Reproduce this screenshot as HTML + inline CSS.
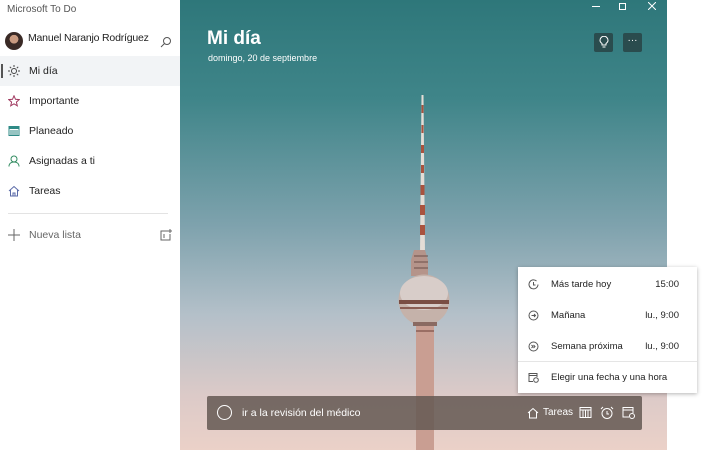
<!DOCTYPE html>
<html><head><meta charset="utf-8"><style>
*{margin:0;padding:0;box-sizing:border-box}
body{width:709px;height:450px;overflow:hidden;background:#fff;font-family:"Liberation Sans",sans-serif;position:relative}
.side{position:absolute;left:0;top:0;width:180px;height:450px;background:#fff;color:#222}
.title{position:absolute;left:7px;top:4px;font-size:10px;color:#555}
.user{position:absolute;left:28px;top:32px;font-size:10.5px;letter-spacing:-0.2px}
.av{position:absolute;left:5px;top:32px;width:18px;height:18px;border-radius:50%;background:radial-gradient(circle at 50% 40%,#c99a80 0 30%,#3a2a26 32%)}
.item{position:absolute;left:0;width:180px;height:30px;font-size:10.5px;line-height:30px;padding-left:29px}
.item svg{position:absolute;left:8px;top:9px}
.sel{background:#f2f4f6}
.sel:before{content:"";position:absolute;left:1px;top:8px;width:2px;height:14px;background:#555}
.main{position:absolute;left:180px;top:0;width:487px;height:450px;background:linear-gradient(180deg,#2e777a 0%,#3f8589 22%,#7ea2ad 50%,#b4c0c9 70%,#dccac8 88%,#ebd1c8 100%);overflow:hidden}
.h1{position:absolute;left:27px;top:28px;color:#fff;font-size:19px;font-weight:bold}
.sub{position:absolute;left:28px;top:53px;color:#fff;font-size:9px}
.btn{position:absolute;top:33px;width:19px;height:19px;background:#2a4c4e;border-radius:2px;color:#fff;font-size:10px;text-align:center;line-height:16px}
.pop{position:absolute;left:518px;top:267px;width:179px;height:126px;background:#fff;box-shadow:0 1px 4px rgba(0,0,0,.3);font-size:9.5px;color:#222}
.pr{position:absolute;left:0;width:179px;height:31px;line-height:31px;padding-left:33px}
.pr span{position:absolute;right:18px}
.pr svg{position:absolute;left:10px;top:10px}
.bar{position:absolute;left:27px;top:396px;width:435px;height:34px;background:rgba(100,88,82,.85);border-radius:2px;color:#fff;font-size:10.5px}
</style></head><body>
<div class="side">
<div class="title">Microsoft To Do</div>
<div class="av"></div>
<div class="user">Manuel Naranjo Rodríguez</div>
<svg style="position:absolute;left:160px;top:36px" width="12" height="12" viewBox="0 0 12 12"><circle cx="7" cy="5" r="3.5" fill="none" stroke="#555"/><path d="M4.5 7.5L1 11" stroke="#555"/></svg>
<div class="item sel" style="top:56px"><svg width="12" height="12" viewBox="0 0 12 12" stroke="#444" fill="none"><circle cx="6" cy="6" r="2.5"/><path d="M6 0v2M6 10v2M0 6h2M10 6h2M1.8 1.8l1.4 1.4M8.8 8.8l1.4 1.4M1.8 10.2l1.4-1.4M8.8 3.2l1.4-1.4"/></svg>Mi día</div>
<div class="item" style="top:86px"><svg width="12" height="12" viewBox="0 0 12 12"><path d="M6 .8l1.5 3.5 3.8.3-2.9 2.5.9 3.7L6 8.8 2.7 10.8l.9-3.7L.7 4.6l3.8-.3z" fill="none" stroke="#a0395f"/></svg>Importante</div>
<div class="item" style="top:116px"><svg width="12" height="12" viewBox="0 0 12 12"><rect x="1" y="1.5" width="10" height="9" fill="none" stroke="#2e8a86"/><rect x="1" y="1.5" width="10" height="2.5" fill="#2e8a86"/><path d="M3 5v5M5 5v5M7 5v5M9 5v5" stroke="#2e8a86"/></svg>Planeado</div>
<div class="item" style="top:146px"><svg width="12" height="12" viewBox="0 0 12 12" fill="none" stroke="#2e8a5e"><circle cx="6" cy="4" r="3"/><path d="M1 11.5c0-3 2.2-4.5 5-4.5s5 1.5 5 4.5"/></svg>Asignadas a ti</div>
<div class="item" style="top:176px"><svg width="12" height="12" viewBox="0 0 12 12" fill="none" stroke="#5a6aa8"><path d="M1 6L6 1.5 11 6M2.5 5v6h7V5M5 11V8h2v3"/></svg>Tareas</div>
<div style="position:absolute;left:8px;top:213px;width:160px;height:1px;background:#e3e3e3"></div>
<div class="item" style="top:220px;color:#666"><svg width="12" height="12" viewBox="0 0 12 12" stroke="#666"><path d="M6 0v12M0 6h12"/></svg>Nueva lista</div>
<svg style="position:absolute;left:160px;top:229px" width="12" height="12" viewBox="0 0 12 12" fill="none" stroke="#666"><path d="M8 2H1v9h9V5M10 0v4M8 2h4M4 5v4"/></svg>
</div>
<div class="main">
<div class="h1">Mi día</div>
<div class="sub">domingo, 20 de septiembre</div>
<div style="position:absolute;left:412px;top:6px;width:8px;height:1px;background:#fff"></div>
<div style="position:absolute;left:439px;top:3px;width:7px;height:7px;border:1px solid #fff"></div>
<svg style="position:absolute;left:468px;top:2px" width="8" height="8" viewBox="0 0 8 8" stroke="#fff"><path d="M0 0L8 8M8 0L0 8"/></svg>
<div class="btn" style="left:414px"><svg width="10" height="12" viewBox="0 0 10 12" style="margin-top:3px" fill="none" stroke="#fff"><path d="M3 9V7.5C1.5 6.5 1 5.5 1 4.3A4 4 0 019 4.3c0 1.2-.5 2.2-2 3.2V9zM3.5 11h3"/></svg></div>
<div class="btn" style="left:443px">···</div>
<svg style="position:absolute;left:0;top:0" width="487" height="450">
<path d="M241.5 95h2l1.5 160h-5z" fill="#e4ddd6"/>
<path d="M241.5 105h2v8h-2zM241.5 125h2v8h-2zM241 145h3v8h-3zM241 165h3v8h-3zM240.5 185h4v10h-4zM240 205h5v10h-5zM240 225h5v10h-5z" fill="#a9533f"/>
<path d="M234 250h11l3 10v16h-17v-16z" fill="#b5948a"/>
<path d="M234 256h14M234 262h14M234 268h14" stroke="#6b4e48"/>
<circle cx="244" cy="300" r="25.5" fill="#c5b2aa"/>
<ellipse cx="244" cy="293" rx="24" ry="17" fill="#d8cdc9"/>
<rect x="219" y="300" width="50" height="4" fill="#7a4e44"/>
<rect x="220" y="307" width="48" height="2" fill="#8a5e54"/>
<rect x="236" y="322" width="18" height="130" fill="#c99e92"/>
<rect x="233" y="322" width="24" height="4" fill="#8a6a62"/>
<rect x="236" y="330" width="18" height="2" fill="#9a6e64"/>
</svg>
<div class="bar">
<div style="position:absolute;left:10px;top:9px;width:15px;height:15px;border:1.5px solid #fff;border-radius:50%"></div>
<div style="position:absolute;left:35px;top:11px">ir a la revisión del médico</div>
<svg style="position:absolute;left:320px;top:11px" width="12" height="12" viewBox="0 0 12 12" fill="none" stroke="#fff"><path d="M1 6L6 1.5 11 6M2.5 5v6h7V5"/></svg>
<div style="position:absolute;left:336px;top:11px;font-size:10px">Tareas</div>
<svg style="position:absolute;left:372px;top:10px" width="13" height="13" viewBox="0 0 13 13" fill="none" stroke="#fff"><rect x="1" y="1.5" width="11" height="10"/><path d="M1 4h11M4 4v7M6.5 4v7M9 4v7"/></svg>
<svg style="position:absolute;left:393px;top:10px" width="14" height="14" viewBox="0 0 14 14" fill="none" stroke="#fff"><circle cx="7" cy="7.5" r="5"/><path d="M7 5v3h2M1 3l2-2M13 3l-2-2"/></svg>
<svg style="position:absolute;left:415px;top:10px" width="13" height="13" viewBox="0 0 13 13" fill="none" stroke="#fff"><path d="M7 11H1V1.5h10V7M1 4h10"/><circle cx="10" cy="10" r="2.5"/></svg>
</div>
</div>
<div class="pop">
<div class="pr" style="top:2px"><svg width="11" height="11" viewBox="0 0 11 11" fill="none" stroke="#555"><path d="M10 5.5A4.5 4.5 0 1 1 8.5 2M5.5 3v3h2"/></svg>Más tarde hoy<span>15:00</span></div>
<div class="pr" style="top:33px"><svg width="11" height="11" viewBox="0 0 11 11" fill="none" stroke="#555"><circle cx="5.5" cy="5.5" r="4.5"/><path d="M3.5 5.5h4M6 4l1.5 1.5L6 7"/></svg>Mañana<span>lu., 9:00</span></div>
<div class="pr" style="top:64px"><svg width="11" height="11" viewBox="0 0 11 11" fill="none" stroke="#555"><circle cx="5.5" cy="5.5" r="4.5"/><path d="M3.5 4l1.5 1.5L3.5 7M5.5 4L7 5.5 5.5 7"/></svg>Semana próxima<span>lu., 9:00</span></div>
<div style="position:absolute;left:0;top:94px;width:179px;height:1px;background:#e5e5e5"></div>
<div class="pr" style="top:95px"><svg width="11" height="11" viewBox="0 0 11 11" fill="none" stroke="#555"><path d="M5 9.5H1V1.5h8V5M1 3.5h8"/><circle cx="8" cy="8" r="2.3"/></svg>Elegir una fecha y una hora</div>
</div>
</body></html>
